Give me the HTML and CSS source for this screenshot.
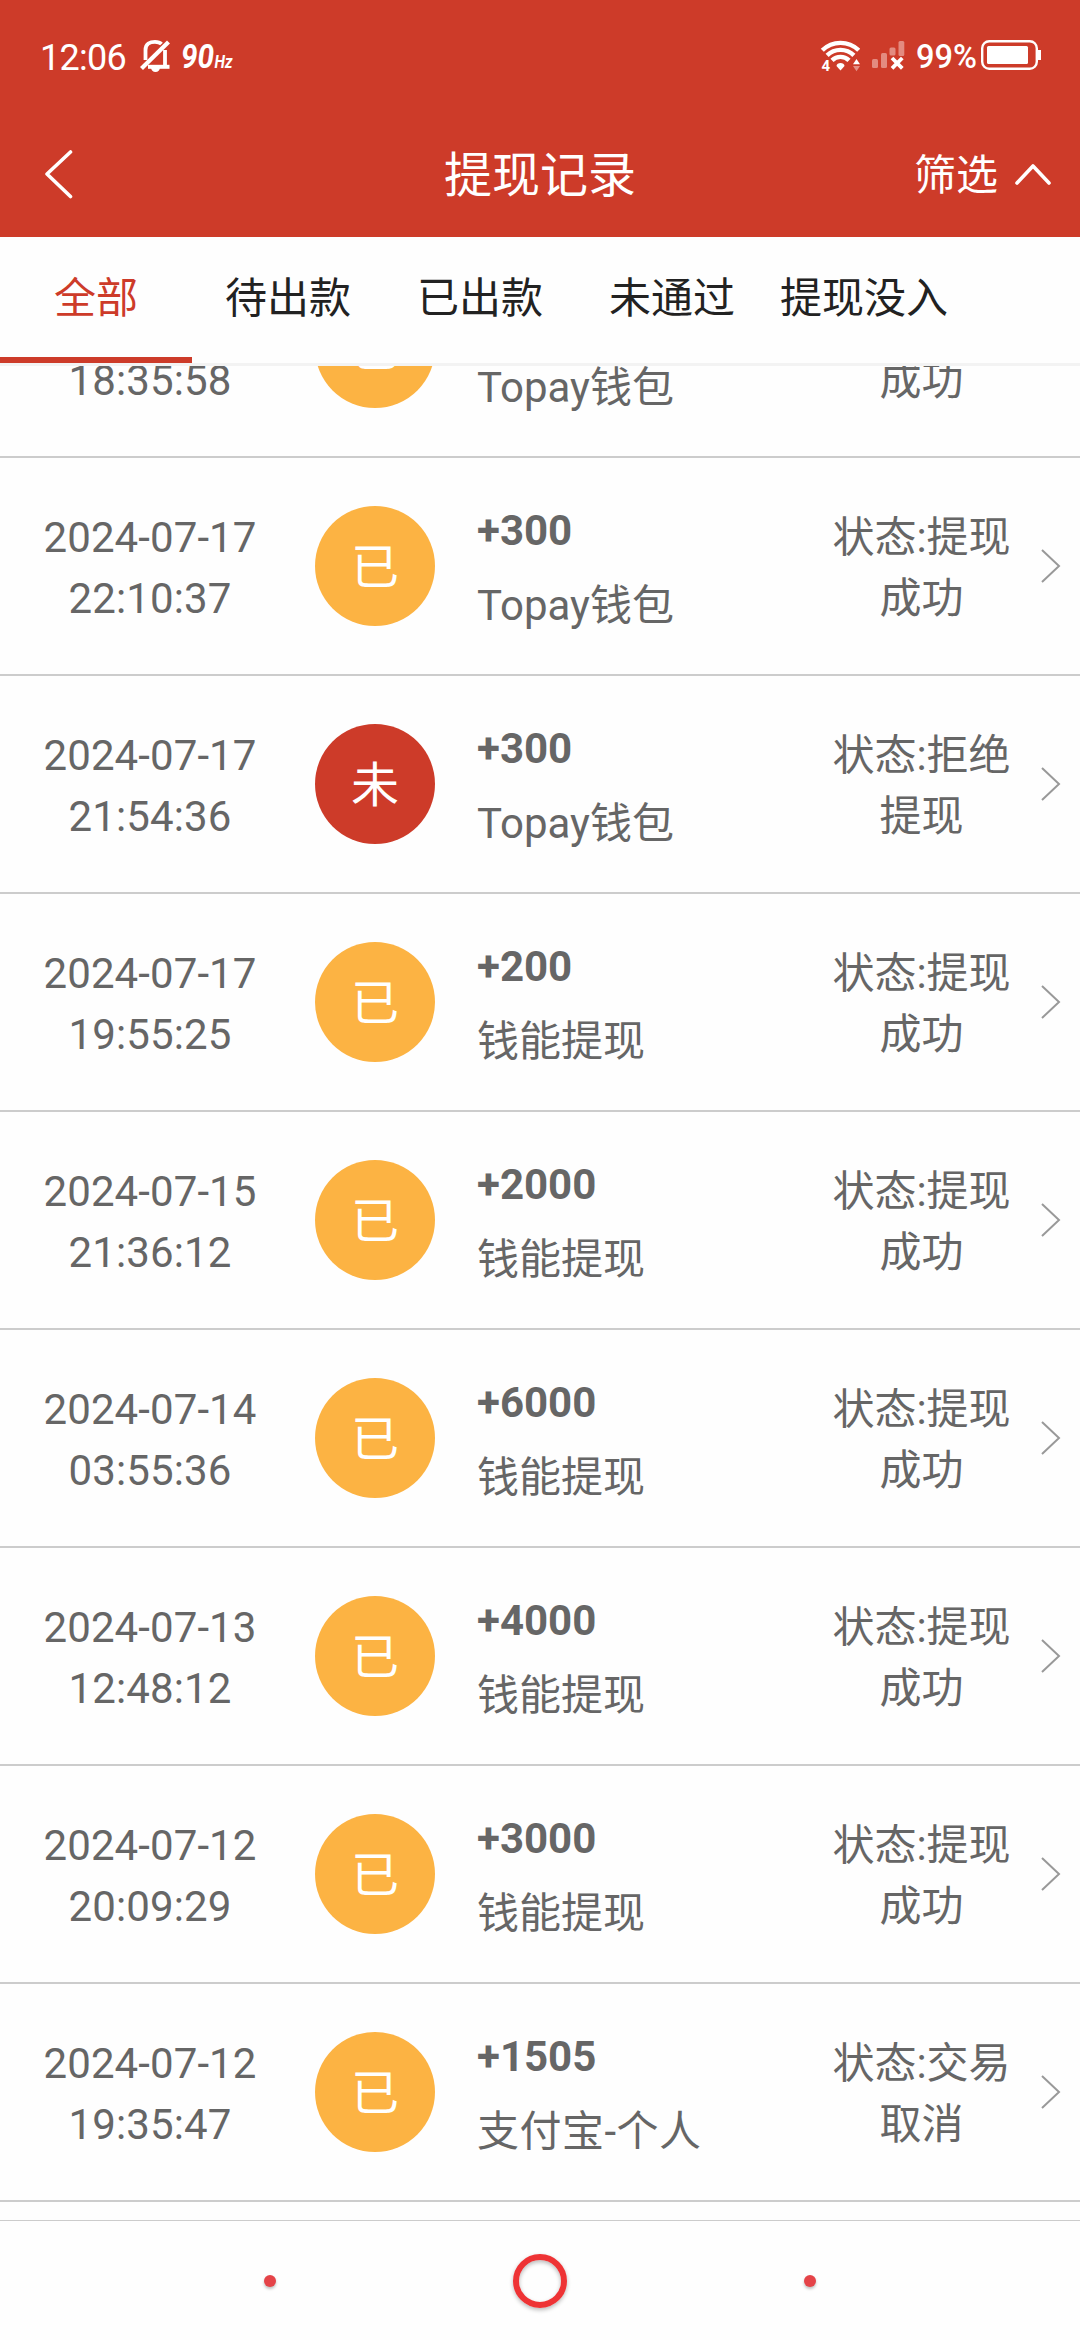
FILE: index.html
```html
<!DOCTYPE html>
<html lang="zh-CN">
<head>
<meta charset="utf-8">
<title>提现记录</title>
<link rel="stylesheet" href="styles.css">
</head>
<body>
<div class="app">
  <header class="header">
    <div class="status-bar">
      <div class="status-left">
        <span class="clock">12:06</span>
        <svg class="bell" width="30" height="34" viewBox="0 0 30 34" fill="none" stroke="#fff">
          <path d="M5.500 22V12C5.500 5.500 10 3.800 15 3.800C18 3.800 20 4.500 21.500 6M25 12V27" stroke-width="3.800"/>
          <path d="M8 28.800H29.500" stroke-width="4"/>
          <path d="M1.500 30.500L28.500 4" stroke-width="4.200"/>
          <path d="M11 29.500H20C20 32 18 34 15.500 34S11 32 11 29.500Z" fill="#fff" stroke="none"/>
        </svg>
        <svg class="rate" width="56" height="48" viewBox="0 -8 56 48" fill="#fff">
          <text class="rate-num" x="1" y="29.500" textLength="33" lengthAdjust="spacingAndGlyphs">90</text>
          <text class="rate-unit" x="34.500" y="29.500" textLength="18" lengthAdjust="spacingAndGlyphs">Hz</text>
        </svg>
      </div>
      <div class="status-right">
        <svg width="40" height="42" viewBox="0 0 40 42" fill="none" stroke="#fff">
          <path d="M2.300 12.300A26 26 0 0 1 38.700 12.300" stroke-width="4.400"/>
          <path d="M7.100 17.400A19 19 0 0 1 33.900 17.400" stroke-width="4.400"/>
          <path d="M12 22.400A12 12 0 0 1 29 22.400" stroke-width="4.400"/>
          <path d="M20.500 32.500L16.500 28C16.500 24 24.500 24 24.500 28Z" fill="#fff" stroke="none"/>
          <path d="M33 26.200L36.500 21L40 26.200Z" fill="#fff" stroke="none"/>
          <path d="M33 28L36.500 33.200L40 28Z" fill="#e58f85" stroke="none"/>
          <text class="wifi-gen" x="1.500" y="33" fill="#fff" stroke="none">4</text>
        </svg>
        <svg class="signal" width="34" height="34" viewBox="0 0 34 34" fill="#e38b80">
          <rect x="0" y="21" width="6" height="9" rx="1.500"/>
          <rect x="9" y="15" width="6" height="15" rx="1.500"/>
          <rect x="17.500" y="9.500" width="6" height="8" rx="1.500"/>
          <rect x="26.500" y="3" width="5.800" height="15" rx="1.500"/>
          <path d="M20 20L30.300 30.300M30.300 20L20 30.300" stroke="#fff" stroke-width="3.800"/>
        </svg>
        <svg class="level" width="64" height="48" viewBox="0 -8 64 48" fill="#fff">
          <text class="level-text" x="1" y="30" textLength="61" lengthAdjust="spacingAndGlyphs">99%</text>
        </svg>
        <svg class="battery" width="62" height="34" viewBox="0 0 62 34">
          <rect x="2.200" y="3.200" width="54.600" height="27.600" rx="7" fill="none" stroke="#fff" stroke-width="2.400"/>
          <rect x="7" y="8" width="41" height="18" rx="1.500" fill="#fff"/>
          <path d="M58 12H61V22H58Z" fill="#fff"/>
        </svg>
      </div>
    </div>
    <div class="title-bar">
      <svg class="back" width="32" height="50" viewBox="0 0 32 50" fill="none" stroke="#fff" stroke-width="3.600" stroke-linecap="round" stroke-linejoin="round"><path d="M29.500 3L6 25L29.500 47.500"/></svg>
      <h1 class="title">提现记录</h1>
      <div class="filter">
        <span class="filter-text">筛选</span>
        <svg width="38" height="24" viewBox="0 0 38 24" fill="none" stroke="#fff" stroke-width="3.600" stroke-linecap="round" stroke-linejoin="round"><path d="M3 21L19 4L35 21"/></svg>
      </div>
    </div>
  </header>

  <nav class="tabs">
    <a class="tab tab-active">全部</a>
    <a class="tab">待出款</a>
    <a class="tab">已出款</a>
    <a class="tab">未通过</a>
    <a class="tab">提现没入</a>
  </nav>

  <main class="list">
    <div class="row row-scrolled">
      <div class="date">&nbsp;<br>18:35:58</div>
      <div class="badge">已</div>
      <div class="info"><b>&nbsp;</b><span>Topay钱包</span></div>
      <div class="state">&nbsp;<br>成功</div>
      <svg class="arrow" viewBox="0 0 20 34"><path d="M1 1L18 17L1 33"/></svg>
    </div>
    <div class="row">
      <div class="date">2024-07-17<br>22:10:37</div>
      <div class="badge">已</div>
      <div class="info"><b>+300</b><span>Topay钱包</span></div>
      <div class="state">状态:提现<br>成功</div>
      <svg class="arrow" viewBox="0 0 20 34"><path d="M1 1L18 17L1 33"/></svg>
    </div>
    <div class="row">
      <div class="date">2024-07-17<br>21:54:36</div>
      <div class="badge badge-failed">未</div>
      <div class="info"><b>+300</b><span>Topay钱包</span></div>
      <div class="state">状态:拒绝<br>提现</div>
      <svg class="arrow" viewBox="0 0 20 34"><path d="M1 1L18 17L1 33"/></svg>
    </div>
    <div class="row">
      <div class="date">2024-07-17<br>19:55:25</div>
      <div class="badge">已</div>
      <div class="info"><b>+200</b><span>钱能提现</span></div>
      <div class="state">状态:提现<br>成功</div>
      <svg class="arrow" viewBox="0 0 20 34"><path d="M1 1L18 17L1 33"/></svg>
    </div>
    <div class="row">
      <div class="date">2024-07-15<br>21:36:12</div>
      <div class="badge">已</div>
      <div class="info"><b>+2000</b><span>钱能提现</span></div>
      <div class="state">状态:提现<br>成功</div>
      <svg class="arrow" viewBox="0 0 20 34"><path d="M1 1L18 17L1 33"/></svg>
    </div>
    <div class="row">
      <div class="date">2024-07-14<br>03:55:36</div>
      <div class="badge">已</div>
      <div class="info"><b>+6000</b><span>钱能提现</span></div>
      <div class="state">状态:提现<br>成功</div>
      <svg class="arrow" viewBox="0 0 20 34"><path d="M1 1L18 17L1 33"/></svg>
    </div>
    <div class="row">
      <div class="date">2024-07-13<br>12:48:12</div>
      <div class="badge">已</div>
      <div class="info"><b>+4000</b><span>钱能提现</span></div>
      <div class="state">状态:提现<br>成功</div>
      <svg class="arrow" viewBox="0 0 20 34"><path d="M1 1L18 17L1 33"/></svg>
    </div>
    <div class="row">
      <div class="date">2024-07-12<br>20:09:29</div>
      <div class="badge">已</div>
      <div class="info"><b>+3000</b><span>钱能提现</span></div>
      <div class="state">状态:提现<br>成功</div>
      <svg class="arrow" viewBox="0 0 20 34"><path d="M1 1L18 17L1 33"/></svg>
    </div>
    <div class="row">
      <div class="date">2024-07-12<br>19:35:47</div>
      <div class="badge">已</div>
      <div class="info"><b>+1505</b><span class="spaced">支付宝-个人</span></div>
      <div class="state">状态:交易<br>取消</div>
      <svg class="arrow" viewBox="0 0 20 34"><path d="M1 1L18 17L1 33"/></svg>
    </div>
  </main>

  <footer class="nav-bar">
    <span class="nav-dot"></span>
    <span class="nav-home"></span>
    <span class="nav-dot"></span>
  </footer>
</div>
</body>
</html>
```
FILE: styles.css
```css
* {
  box-sizing: border-box;
}

body {
  margin: 0;
  font-family: Roboto, "Noto Sans CJK SC", sans-serif;
  font-size: 42px;
  line-height: 61px;
  color: #666;
  background: #fefefe;
}

.app {
  display: flex;
  flex-direction: column;
  width: 1080px;
  height: 2340px;
  overflow: hidden;
}

.header {
  height: 237px;
  flex: none;
  color: #fff;
  background: #cd3b29;
}

.status-bar {
  display: flex;
  justify-content: space-between;
  height: 111px;
  padding: 38px 38px 0 39px;
}

.status-left,
.status-right {
  display: flex;
  align-items: flex-start;
}

.clock {
  width: 101px;
  padding-left: 1px;
  font-size: 36px;
  line-height: 40px;
  letter-spacing: -0.7px;
}

.rate {
  margin: -8px 0 0 10px;
}

.rate-num {
  font: italic 700 34px Roboto, sans-serif;
}

.rate-unit {
  font: italic 700 18px Roboto, sans-serif;
}

.wifi-gen {
  font: 700 15px Roboto, sans-serif;
}

.signal {
  margin-left: 12px;
}

.level {
  margin: -8px 0 0 9px;
}

.level-text {
  font: 500 34px Roboto, sans-serif;
}

.battery {
  margin-left: 1px;
}

.title-bar {
  display: grid;
  grid-template-columns: 1fr auto 1fr;
  align-items: center;
  height: 126px;
  padding: 0 28px 0 41px;
}

.title {
  margin: 0 13px 0 0;
  padding-top: 4px;
  font-size: 48px;
  font-weight: 400;
  line-height: 70px;
}

.filter {
  display: flex;
  align-items: center;
  justify-content: flex-end;
  gap: 16px;
}

.filter-text {
  padding-top: 3px;
}

.tabs {
  display: flex;
  flex: none;
  height: 129px;
  border-bottom: 3px solid #f3f3f3;
  background: #fefefe;
}

.tab {
  width: 192px;
  padding-top: 31px;
  border-bottom: 6px solid transparent;
  text-align: center;
  color: #222;
}

.tab-active {
  color: #cd3b29;
  border-color: #cd3b29;
}

.list {
  flex: 1;
  overflow: hidden;
}

.row {
  display: grid;
  grid-template-columns: 300px 150px 354px 235px 41px;
  align-items: center;
  height: 218px;
  border-bottom: 2px solid #ccc;
}

.row-scrolled {
  margin-top: -126px;
}

.date,
.state {
  padding-top: 4px;
  text-align: center;
}

.date {
  letter-spacing: 0.1px;
}

.badge {
  justify-self: center;
  width: 120px;
  height: 120px;
  border-radius: 50%;
  font-size: 48px;
  line-height: 123px;
  text-align: center;
  color: #fff;
  background: #fcb343;
}

.badge-failed {
  background: #cd3b29;
}

.info {
  display: flex;
  flex-direction: column;
  gap: 14px;
  padding: 4px 0 0 27px;
}

.spaced {
  letter-spacing: 0.5px;
}

.arrow {
  width: 20px;
  height: 34px;
  margin-left: 2px;
  fill: none;
  stroke: #999;
  stroke-width: 2;
}

.nav-bar {
  display: flex;
  align-items: center;
  justify-content: space-between;
  flex: none;
  height: 120px;
  padding: 0 264px;
  border-top: 1px solid #ccc;
  background: #fefefe;
}

.nav-dot {
  width: 12px;
  height: 12px;
  border-radius: 50%;
  background: #e54348;
  box-shadow: 0 2px 3px rgba(0, 0, 0, 0.25);
}

.nav-home {
  width: 54px;
  height: 54px;
  border: 6px solid #ee3335;
  border-radius: 50%;
  box-shadow: 0 2px 4px rgba(0, 0, 0, 0.28), inset 0 2px 4px rgba(0, 0, 0, 0.28);
}
```
